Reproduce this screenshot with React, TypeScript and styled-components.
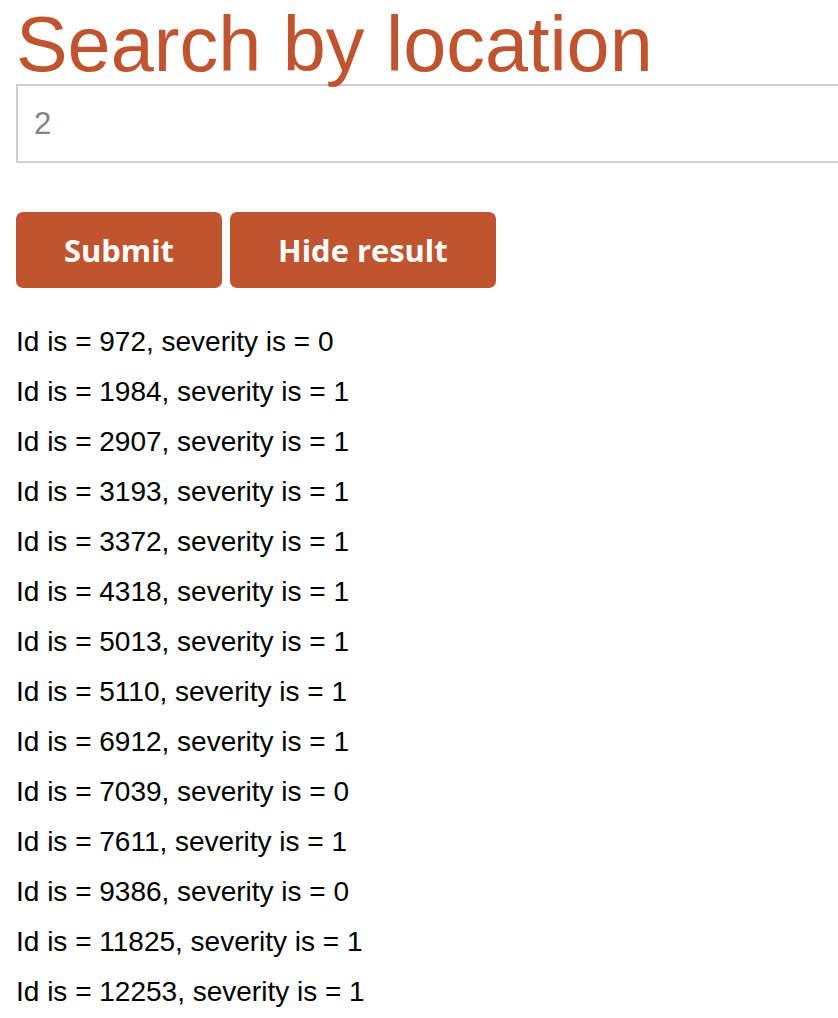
import React from "react";
import styled, { createGlobalStyle } from "styled-components";

const GlobalStyle = createGlobalStyle`
  html, body {
    margin: 0;
    padding: 0;
    background: #ffffff;
    overflow-x: hidden;
  }
`;

const accent = "#c0542f";

const Page = styled.div`
  padding: 5px 0 0 16px;
  font-family: "Liberation Sans", Arial, sans-serif;
  overflow: hidden;
`;

const Title = styled.h1`
  margin: 0 0 1px 0;
  font-family: "Liberation Sans", Arial, sans-serif;
  font-weight: 400;
  font-size: 77.4px;
  line-height: 78px;
  color: ${accent};
  white-space: nowrap;
`;

const SearchInput = styled.input`
  display: block;
  box-sizing: border-box;
  width: 900px;
  height: 79px;
  margin: 0;
  padding: 0 16px;
  border: 2px solid #cfcfcf;
  border-radius: 0;
  outline: none;
  font-family: "Liberation Sans", Arial, sans-serif;
  font-size: 31px;
  color: #333;
  background: #fff;

  &::placeholder {
    color: #838383;
  }
`;

const ButtonRow = styled.div`
  display: flex;
  gap: 8px;
  margin-top: 49px;
`;

const ActionButton = styled.button`
  height: 76px;
  padding: 0 48px;
  border: none;
  border-radius: 7px;
  background: ${accent};
  color: #ffffff;
  font-family: "Open Sans", sans-serif;
  font-weight: 700;
  font-size: 30.9px;
  cursor: pointer;
`;

const ResultList = styled.ul`
  list-style: none;
  margin: 29px 0 0 0;
  padding: 0;
`;

const ResultItem = styled.li`
  font-family: "Liberation Sans", Arial, sans-serif;
  font-size: 28px;
  line-height: 50px;
  color: #000;
  white-space: nowrap;
`;

const results: Array<[number, number]> = [
  [972, 0],
  [1984, 1],
  [2907, 1],
  [3193, 1],
  [3372, 1],
  [4318, 1],
  [5013, 1],
  [5110, 1],
  [6912, 1],
  [7039, 0],
  [7611, 1],
  [9386, 0],
  [11825, 1],
  [12253, 1],
];

export default function App() {
  return (
    <>
      <GlobalStyle />
      <Page>
        <Title>Search by location</Title>
        <SearchInput type="text" placeholder="2" />
        <ButtonRow>
          <ActionButton>Submit</ActionButton>
          <ActionButton>Hide result</ActionButton>
        </ButtonRow>
        <ResultList>
          {results.map(([id, sev]) => (
            <ResultItem key={id}>
              Id is = {id}, severity is = {sev}
            </ResultItem>
          ))}
        </ResultList>
      </Page>
    </>
  );
}
